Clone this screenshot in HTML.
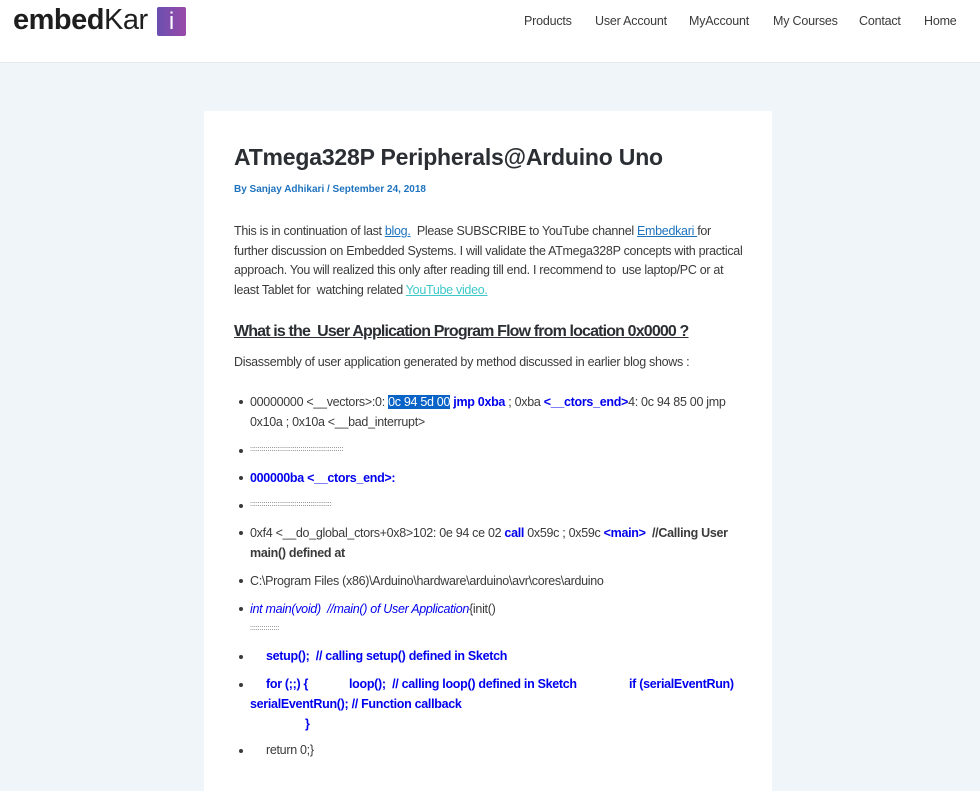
<!DOCTYPE html>
<html><head><meta charset="utf-8"><style>
body{margin:0;width:980px;height:769px;overflow:hidden;background:#f0f5fa;font-family:"Liberation Sans",sans-serif;color:#3a3a3a;position:relative}
.hdr{position:absolute;left:0;top:0;width:980px;height:62px;background:#fff;border-bottom:1px solid #e5e9ee}
.logo{position:absolute;left:13px;top:4px;font-size:29px;color:#1e1e1e;letter-spacing:-0.5px}
.logo b{font-weight:bold}
.ibox{position:absolute;left:157px;top:7px;width:29px;height:29px;background:linear-gradient(90deg,#6a4fb0,#9a4aa8);border-radius:2px;color:#fff;font-size:24px;text-align:center;line-height:29px}
.nav{position:absolute;top:14px;font-size:12.5px;color:#3a3a3a;letter-spacing:-0.2px}
.card{position:absolute;left:204px;top:111px;width:568px;height:680px;background:#fff}
.t{position:absolute;white-space:nowrap;font-size:12.5px;line-height:16px;letter-spacing:-0.3px}
.bl{color:#0000ee;font-weight:bold}
.dot{position:absolute;left:239px;width:4px;height:4px;border-radius:50%;background:#3a3a3a}
a{color:#1e73be}
</style></head><body>
<div class="hdr">
<div class="logo"><b>embed</b>Kar</div><div class="ibox">i</div>
<div class="nav" style="left:524px">Products</div>
<div class="nav" style="left:595px">User Account</div>
<div class="nav" style="left:689px">MyAccount</div>
<div class="nav" style="left:773px">My Courses</div>
<div class="nav" style="left:859px">Contact</div>
<div class="nav" style="left:924px">Home</div>
</div>
<div class="card"></div>
<div class="t" style="left:234px;top:143px;font-size:23px;line-height:28px;color:#2b2f33;font-weight:bold;letter-spacing:-0.2px">ATmega328P Peripherals@Arduino Uno</div>
<div class="t" style="left:234px;top:182px;font-size:10px;color:#1e73be;font-weight:bold;letter-spacing:0">By Sanjay Adhikari / September 24, 2018</div>
<div class="t" style="left:234px;top:223px">This is in continuation of last <a href="#">blog.</a>&nbsp; Please SUBSCRIBE to YouTube channel <a href="#">Embedkari </a> for</div>
<div class="t" style="left:234px;top:243px">further discussion on Embedded Systems. I will validate the ATmega328P concepts with practical</div>
<div class="t" style="left:234px;top:262px">approach. You will realized this only after reading till end. I recommend to&nbsp; use laptop/PC or at</div>
<div class="t" style="left:234px;top:282px">least Tablet for&nbsp; watching related <a href="#" style="color:#3ec8c8">YouTube video.</a></div>
<div class="t" style="left:234px;top:322px;font-size:16px;line-height:20px;text-decoration:underline;color:#2b2f33;font-weight:bold;letter-spacing:-0.85px">What is the&nbsp; User Application Program Flow from location 0x0000 ?</div>
<div class="t" style="left:234px;top:354px">Disassembly of user application generated by method discussed in earlier blog shows :</div>
<div class="dot" style="top:400px"></div>
<div class="t" style="left:250px;top:394px">00000000 &lt;__vectors&gt;:0: <span style="background:#0a64c8;color:#fff">0c 94 5d 00</span> <span class="bl">jmp 0xba</span> ; 0xba <span class="bl">&lt;__ctors_end&gt;</span>4: 0c 94 85 00 jmp</div>
<div class="t" style="left:250px;top:414px">0x10a ; 0x10a &lt;__bad_interrupt&gt;</div>
<div class="dot" style="top:449px"></div>
<div class="t" style="left:250px;top:442px;font-size:7px;letter-spacing:0">::::::::::::::::::::::::::::::::::::::::::::::::</div>
<div class="dot" style="top:476px"></div>
<div class="t bl" style="left:250px;top:470px">000000ba &lt;__ctors_end&gt;:</div>
<div class="dot" style="top:504px"></div>
<div class="t" style="left:250px;top:497px;font-size:7px;letter-spacing:0">::::::::::::::::::::::::::::::::::::::::::</div>
<div class="dot" style="top:531px"></div>
<div class="t" style="left:250px;top:525px">0xf4 &lt;__do_global_ctors+0x8&gt;102: 0e 94 ce 02 <span class="bl">call</span> 0x59c ; 0x59c <span class="bl">&lt;main&gt;</span>&nbsp; <b>//Calling User</b></div>
<div class="t" style="left:250px;top:545px;font-weight:bold">main() defined at</div>
<div class="dot" style="top:579px"></div>
<div class="t" style="left:250px;top:573px">C:\Program Files (x86)\Arduino\hardware\arduino\avr\cores\arduino</div>
<div class="dot" style="top:607px"></div>
<div class="t" style="left:250px;top:601px"><i style="color:#0000ee">int main(void)&nbsp; //main() of User Application</i>{init()</div>
<div class="t" style="left:250px;top:621px;font-size:7px;letter-spacing:0">:::::::::::::::</div>
<div class="dot" style="top:655px"></div>
<div class="t bl" style="left:266px;top:648px">setup();&nbsp; // calling setup() defined in Sketch</div>
<div class="dot" style="top:683px"></div>
<div class="t bl" style="left:266px;top:676px">for (;;) {</div>
<div class="t bl" style="left:349px;top:676px">loop();&nbsp; // calling loop() defined in Sketch</div>
<div class="t bl" style="left:629px;top:676px">if (serialEventRun)</div>
<div class="t bl" style="left:250px;top:696px">serialEventRun(); // Function callback</div>
<div class="t bl" style="left:305px;top:716px">}</div>
<div class="dot" style="top:749px"></div>
<div class="t" style="left:266px;top:742px">return 0;}</div>
</body></html>
